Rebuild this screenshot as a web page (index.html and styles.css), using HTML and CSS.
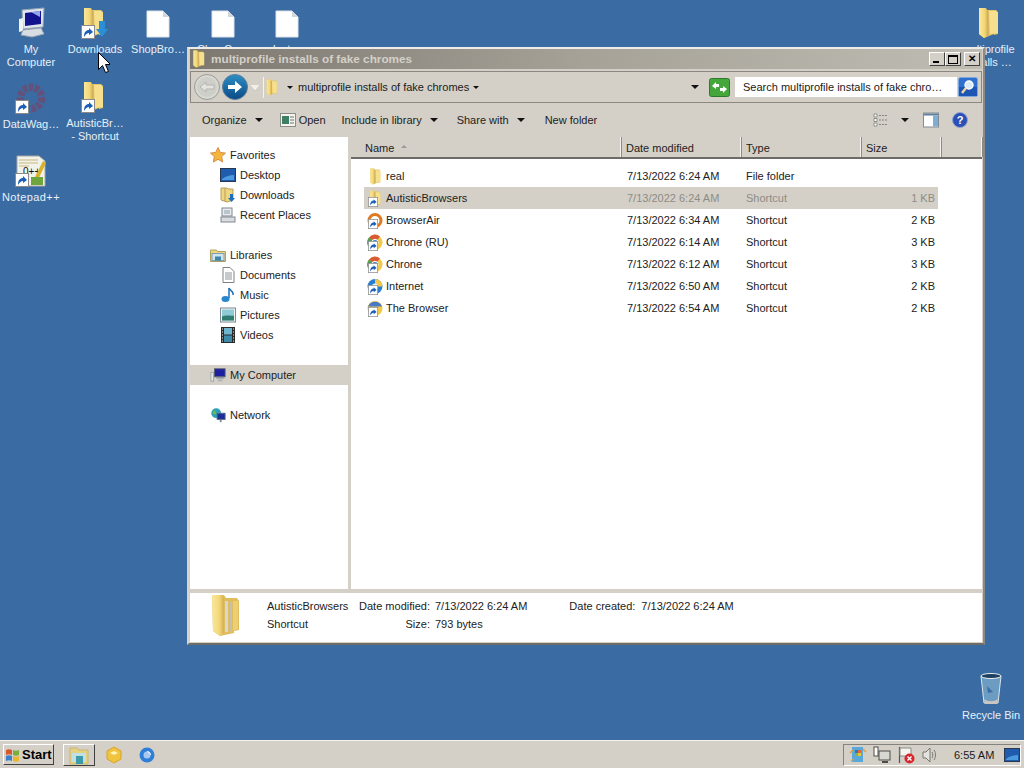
FILE: index.html
```html
<!DOCTYPE html>
<html lang="en">
<head>
<meta charset="utf-8">
<title>multiprofile installs of fake chromes</title>
<link rel="stylesheet" href="styles.css">
</head>
<body>
<svg class="defs" width="0" height="0" aria-hidden="true">
  <defs>
    <linearGradient id="fg" x1="0" x2="1" y1="0" y2="0"><stop offset="0" stop-color="#f8e79c"/><stop offset=".6" stop-color="#f3d878"/><stop offset="1" stop-color="#d3ae52"/></linearGradient>
    <linearGradient id="blue" x1="0" x2="0" y1="0" y2="1"><stop offset="0" stop-color="#2d8fc4"/><stop offset="1" stop-color="#0b4a86"/></linearGradient>
    <symbol id="folder" viewBox="0 0 24 32">
      <path d="M3 1h7l1 2h9l2 2v22l-4 1v-1L8 31 3 27z" fill="#e5c566"/>
      <path d="M3 1h6l3 3v25l-4 2-5-4z" fill="url(#fg)"/>
      <path d="M13 4h7l2 2v20l-8 1z" fill="#f6e08e"/>
      <path d="M12 4v25" stroke="#c9ad63" fill="none"/>
    </symbol>
    <symbol id="bigfolder" viewBox="0 0 32 44">
      <path d="M2 2h12l2 3h11l2 3v29l-5 1v2L10 43l-7-5z" fill="#e0bd5c"/>
      <path d="M2 2h9l3 4v33l-3 4-8-5z" fill="url(#fg)"/>
      <rect x="15" y="8" width="3" height="31" fill="#d8d8d0"/>
      <rect x="20" y="9" width="2" height="29" fill="#c4c0b4"/>
      <path d="M23 8h5v28l-5 2z" fill="#eccf74"/>
    </symbol>
    <symbol id="arrow" viewBox="0 0 14 14">
      <rect x=".5" y=".5" width="13" height="13" fill="#fff" stroke="#8a8a8a"/>
      <path d="M3 12c0-5 2-7 5-7V3l4 4-4 3V8c-2 0-3 1-5 4z" fill="#1c5fb8"/>
    </symbol>
    <symbol id="dlarrow" viewBox="0 0 12 18">
      <path d="M3 1h6v8h3l-6 8-6-8h3z" fill="#2b8fd6"/>
    </symbol>
    <symbol id="file" viewBox="0 0 24 28">
      <path d="M1 1h16l6 6v20H1z" fill="#fff" stroke="#dfe3e8"/>
      <path d="M17 1v6h6z" fill="#cfd6de"/>
    </symbol>
    <symbol id="computer" viewBox="0 0 32 32">
      <path d="M7 3l22-2-1 19-20 2z" fill="#dfe5ee" stroke="#9aa4b2"/>
      <path d="M10 6l16-2v13l-16 2z" fill="#12128f"/>
      <path d="M16 5l9-1v6z" fill="#8fa7e8"/>
      <path d="M4 12l4-1v13l-4 1z" fill="#eef2f6"/>
      <path d="M8 23l18-2 3 6-12 3-11-2z" fill="#d8dde4" stroke="#9aa4b2"/>
    </symbol>
    <symbol id="gear" viewBox="0 0 30 30">
      <circle cx="15" cy="15" r="10" fill="none" stroke="#7f3f62" stroke-width="7" stroke-dasharray="4 1.6"/>
    </symbol>
    <symbol id="npp" viewBox="0 0 30 32">
      <path d="M1 1h22l6 5v25H1z" fill="#f2f2ec" stroke="#a8a8a0"/>
      <path d="M3 5h19M3 8h19M3 11h10" stroke="#c9b878" fill="none"/>
      <text x="7" y="20" font-size="10" font-family="Liberation Sans" fill="#111">0++</text>
      <path d="M16 28L27 6l3 2-10 21z" fill="#d7b22a"/>
      <rect x="15" y="22" width="12" height="8" fill="#6ea53c"/>
    </symbol>
    <symbol id="back" viewBox="0 0 26 26">
      <circle cx="13" cy="13" r="12.5" fill="#d9d9d4" stroke="#9a9a96"/>
      <circle cx="13" cy="13" r="10" fill="#cfcfca"/>
      <path d="M6 13l6-5v3h8v4h-8v3z" fill="#e3e3df" stroke="#b5b5b0"/>
    </symbol>
    <symbol id="fwd" viewBox="0 0 26 26">
      <circle cx="13" cy="13" r="12.5" fill="url(#blue)" stroke="#5a7f9a"/>
      <path d="M20 13l-7-6v4H6v4h7v4z" fill="#fff"/>
    </symbol>
    <symbol id="refresh" viewBox="0 0 21 19">
      <rect x=".5" y=".5" width="20" height="18" rx="2" fill="#45a63c" stroke="#2d7a2c"/>
      <path d="M3 8l4-4v2h3v3H7v2zM18 11l-4 4v-2h-3v-3h3V8z" fill="#fff"/>
    </symbol>
    <symbol id="search" viewBox="0 0 20 20">
      <rect x=".5" y=".5" width="19" height="19" rx="2" fill="#2f6fd0" stroke="#7ea6dc"/>
      <rect x="1" y="10" width="18" height="9" fill="#1c56b4"/>
      <circle cx="11" cy="8" r="4" fill="#d9ebf8" stroke="#fff" stroke-width="1.4"/>
      <path d="M8 11l-4 5" stroke="#f0d9a0" stroke-width="2.4"/>
    </symbol>
    <symbol id="open" viewBox="0 0 16 14">
      <rect x=".5" y=".5" width="15" height="13" fill="#f3f3ef" stroke="#8c8c88"/>
      <rect x="2" y="3" width="7" height="8" fill="#3d7f60"/>
      <path d="M10 4h4M10 7h4M10 10h4" stroke="#70706c"/>
    </symbol>
    <symbol id="views" viewBox="0 0 16 14">
      <path d="M1 1h3v3H1zM1 5.500h3v3H1zM1 10h3v3H1z" fill="#fff" stroke="#8e8e8a"/>
      <path d="M6 2.500h9M6 7h9M6 11.500h9" stroke="#85857f" stroke-dasharray="2 1"/>
    </symbol>
    <symbol id="pane" viewBox="0 0 16 15">
      <rect x=".5" y=".5" width="15" height="14" fill="#fff" stroke="#7f8a94"/>
      <rect x="1" y="1" width="14" height="2" fill="#5f7f9a"/>
      <rect x="10" y="3" width="5" height="11" fill="#7faed0"/>
    </symbol>
    <symbol id="help" viewBox="0 0 16 16">
      <circle cx="8" cy="8" r="7.500" fill="#2b4fb5" stroke="#8ea3cf"/>
      <text x="8" y="12" text-anchor="middle" font-size="11" font-weight="700" font-family="Liberation Sans" fill="#fff">?</text>
    </symbol>
    <symbol id="star" viewBox="0 0 16 16">
      <path d="M8 .5l2.300 5 5.200.6-3.900 3.500 1.100 5.400L8 12.300 3.300 15l1.100-5.400L.5 6.100l5.200-.6z" fill="#f5b63c" stroke="#d98a45"/>
    </symbol>
    <symbol id="desktop" viewBox="0 0 16 14">
      <rect x=".5" y=".5" width="15" height="13" fill="#1f5cae" stroke="#29384f"/>
      <path d="M2 11c4-3 8-4 12-4v5H2z" fill="#4b9ae0"/>
    </symbol>
    <symbol id="dl" viewBox="0 0 16 16">
      <path d="M1 1h6l1 1h5v11l-6 2-6-2z" fill="#eed582" stroke="#b89f58"/>
      <path d="M5 1v13" stroke="#b89f58"/>
      <path d="M10 7h3v4h2l-3.500 4L8 11h2z" fill="#1d6fbe"/>
    </symbol>
    <symbol id="recent" viewBox="0 0 16 16">
      <rect x="2" y="1" width="10" height="8" fill="#e9ecef" stroke="#808890"/>
      <rect x="4" y="3" width="6" height="4" fill="#bac4cc"/>
      <rect x="1" y="10" width="14" height="5" fill="#d8dce0" stroke="#808890"/>
    </symbol>
    <symbol id="libs" viewBox="0 0 16 15">
      <path d="M.5 2.500h6l1 1.500h8v10H.5z" fill="#eed582" stroke="#b0a060"/>
      <rect x="2" y="6" width="12" height="7" fill="#cfe6ef" stroke="#7aa0b0"/>
      <rect x="5" y="9" width="6" height="4" fill="#3f86a8"/>
    </symbol>
    <symbol id="doc" viewBox="0 0 16 16">
      <path d="M3 .5h7l4 4v11H3z" fill="#fff" stroke="#7c8288"/>
      <path d="M5 6h7M5 8h7M5 10h7M5 12h7" stroke="#8f959b"/>
    </symbol>
    <symbol id="music" viewBox="0 0 16 16">
      <path d="M9 1v10" stroke="#1f6fb5" stroke-width="1.500" fill="none"/>
      <path d="M9 1c1 3 5 3 4 7" stroke="#1f6fb5" stroke-width="1.500" fill="none"/>
      <ellipse cx="5.500" cy="12" rx="4" ry="3" fill="#2a86cc"/>
    </symbol>
    <symbol id="pics" viewBox="0 0 16 15">
      <rect x=".5" y=".5" width="15" height="14" fill="#f5f5f2" stroke="#7f8890"/>
      <rect x="2" y="2" width="12" height="11" fill="#8ecbd6"/>
      <path d="M2 9c4-2 8 0 12-1v5H2z" fill="#2f7d70"/>
    </symbol>
    <symbol id="videos" viewBox="0 0 14 16">
      <rect width="14" height="16" fill="#2a2a2a"/>
      <rect x="3" y="1" width="8" height="6.500" fill="#6db4cf"/>
      <rect x="3" y="8.500" width="8" height="6.500" fill="#3d8aa8"/>
      <path d="M1 2h1M1 5h1M1 8h1M1 11h1M1 14h1M12 2h1M12 5h1M12 8h1M12 11h1M12 14h1" stroke="#eee"/>
    </symbol>
    <symbol id="pc" viewBox="0 0 18 16">
      <rect x="5" y="1" width="12" height="9" fill="#1b1fa0" stroke="#5a6270"/>
      <path d="M9 13h5v2H9z" fill="#aab0b8"/>
      <path d="M7 11h9" stroke="#8a929c" stroke-width="2"/>
      <rect x="1" y="5" width="3" height="10" fill="#e6e8ea" stroke="#9aa0a6"/>
    </symbol>
    <symbol id="net" viewBox="0 0 18 16">
      <circle cx="7" cy="6" r="5.500" fill="#2fa0b5"/>
      <path d="M4 3c2 0 3 1 3 3S4 7 3 6z" fill="#69bb4a"/>
      <rect x="8" y="6" width="9" height="7" fill="#1b2f9a" stroke="#5a6a80"/>
      <path d="M12 13v3" stroke="#7a828c" stroke-width="2"/>
    </symbol>
    <symbol id="ring" viewBox="0 0 16 16">
      <circle cx="8" cy="8" r="6" fill="none" stroke="#e07a22" stroke-width="3"/>
      <circle cx="8" cy="8" r="3" fill="#fff"/>
    </symbol>
    <symbol id="chrome" viewBox="0 0 16 16">
      <circle cx="8" cy="8" r="7.500" fill="#f2c84a"/>
      <path d="M8 8L2 3a7.500 7.500 0 0 1 11-1z" fill="#dc5a32"/>
      <path d="M8 8L2 3a7.500 7.500 0 0 0 3 12z" fill="#4f9e50"/>
      <circle cx="8" cy="8" r="3.200" fill="#4a88d8" stroke="#fff"/>
    </symbol>
    <symbol id="inet" viewBox="0 0 16 16">
      <circle cx="8" cy="8" r="7.500" fill="#2a7ed0"/>
      <path d="M8 .5a7.500 7.500 0 0 1 7.500 7.500H8z" fill="#f2c84a"/>
      <circle cx="8" cy="8" r="3" fill="#e8f2fb"/>
    </symbol>
    <symbol id="browser" viewBox="0 0 16 16">
      <circle cx="8" cy="8" r="7.500" fill="#f2c84a"/>
      <path d="M1 6a7.500 7.500 0 0 1 14 0z" fill="#4a78c8"/>
      <path d="M1 9c3-1 5 0 6 6a7.500 7.500 0 0 1-6-6z" fill="#4f9e50"/>
    </symbol>
    <symbol id="logo" viewBox="0 0 16 16">
      <path d="M1 3c2-1 4-1 6 0v5c-2-1-4-1-6 0z" fill="#d9582b"/>
      <path d="M8 3c2 1 4 1 6 0v5c-2 1-4 1-6 0z" fill="#7bae3c"/>
      <path d="M1 9c2-1 4-1 6 0v5c-2-1-4-1-6 0z" fill="#3c80c8"/>
      <path d="M8 9c2 1 4 1 6 0v5c-2 1-4 1-6 0z" fill="#e8b72e"/>
    </symbol>
    <symbol id="explorer" viewBox="0 0 22 20">
      <path d="M2 3h7l2 2h9v14H2z" fill="#e6d180" stroke="#c8b870"/>
      <rect x="4" y="8" width="14" height="9" fill="#bfe0e6"/>
      <rect x="8" y="11" width="7" height="8" fill="#3f9aa8"/>
    </symbol>
    <symbol id="hex" viewBox="0 0 18 18">
      <path d="M9 1l7 4v8l-7 4-7-4V5z" fill="#f0c43e" stroke="#d9a22a"/>
      <path d="M5 7l4-2 4 2-4 2z" fill="#fff3b8"/>
    </symbol>
    <symbol id="qchrome" viewBox="0 0 16 16">
      <circle cx="8" cy="8" r="7.500" fill="#2f7fd8"/>
      <circle cx="8" cy="8" r="3.500" fill="#a9c8ef"/>
      <path d="M8 4.500a3.500 3.500 0 0 1 3.500 3.500" stroke="#fff" fill="none"/>
    </symbol>
    <symbol id="update" viewBox="0 0 18 18">
      <rect x="3" y="1" width="11" height="15" fill="#58a8dc"/>
      <rect x="6" y="4" width="3" height="3" fill="#3a6fc0"/><rect x="9" y="4" width="3" height="3" fill="#d86a3a"/>
      <rect x="6" y="7" width="3" height="3" fill="#7ab84a"/><rect x="9" y="7" width="3" height="3" fill="#e8c23a"/>
      <path d="M1 7l3-3M17 6l-3-3M2 15l3-2" stroke="#e0a040" stroke-width="1.500"/>
    </symbol>
    <symbol id="lan" viewBox="0 0 18 18">
      <rect x="6" y="5" width="11" height="9" fill="#d8d8d2" stroke="#4c4c48"/>
      <rect x="1" y="1" width="4" height="9" fill="#fff" stroke="#4c4c48"/>
      <path d="M9 16h6" stroke="#4c4c48" stroke-width="2"/>
    </symbol>
    <symbol id="flag" viewBox="0 0 18 18">
      <path d="M2.500 1v16" stroke="#55554f" stroke-width="1.200"/>
      <path d="M3 2h11v8H3z" fill="#f4f4f0" stroke="#8a8a84"/>
      <circle cx="12.500" cy="12.500" r="5" fill="#d8262c"/>
      <path d="M10.500 10.500l4 4M14.500 10.500l-4 4" stroke="#fff" stroke-width="1.400"/>
    </symbol>
    <symbol id="speaker" viewBox="0 0 18 18">
      <path d="M2 6h3l4-4v14l-4-4H2z" fill="#e4e4de" stroke="#777770"/>
      <path d="M11 6c1 2 1 4 0 6M13 4c2 3 2 7 0 10" stroke="#777770" fill="none"/>
    </symbol>
    <symbol id="bin" viewBox="0 0 26 34">
      <path d="M3 4h20l-3 27H6z" fill="#6d9cc2" stroke="#dce4ea"/>
      <ellipse cx="13" cy="4" rx="10" ry="2.500" fill="#1d3f60" stroke="#e8eef2"/>
      <path d="M6 27c4 3 10 3 14 0l-1 5H7z" fill="#c9c5c1"/>
      <path d="M9 14l6 6-5 1z" fill="#3a6fa6"/>
    </symbol>
  </defs>
</svg>

<main class="desktop">
  <div class="dicon pos-computer"><svg class="ico-32"><use href="#computer"/></svg><span>My<br>Computer</span></div>
  <div class="dicon pos-downloads"><div class="stack stack-left"><svg class="ico-folder"><use href="#folder"/></svg><svg class="ov"><use href="#arrow"/></svg><svg class="ov-dl"><use href="#dlarrow"/></svg></div><span>Downloads</span></div>
  <div class="dicon pos-shop"><svg class="ico-file"><use href="#file"/></svg><span>ShopBro…</span></div>
  <div class="dicon pos-f2"><svg class="ico-file"><use href="#file"/></svg><span>Char Co…</span></div>
  <div class="dicon pos-f3"><svg class="ico-file"><use href="#file"/></svg><span>Inst…</span></div>
  <div class="dicon pos-wag"><div class="stack"><svg class="ico-gear"><use href="#gear"/></svg><svg class="ov"><use href="#arrow"/></svg></div><span>DataWag…</span></div>
  <div class="dicon pos-autistic"><div class="stack stack-left"><svg class="ico-folder"><use href="#folder"/></svg><svg class="ov"><use href="#arrow"/></svg></div><span>AutisticBr…<br>- Shortcut</span></div>
  <div class="dicon pos-npp"><div class="stack"><svg class="ico-32"><use href="#npp"/></svg><svg class="ov"><use href="#arrow"/></svg></div><span>Notepad++</span></div>
  <div class="dicon pos-multi"><svg class="ico-folder"><use href="#folder"/></svg><span>multiprofile<br>installs …</span></div>
  <div class="dicon pos-bin"><svg class="ico-bin"><use href="#bin"/></svg><span>Recycle Bin</span></div>

  <section class="window">
    <header class="titlebar">
      <svg class="title-ico"><use href="#folder"/></svg>
      <h1 class="title">multiprofile installs of fake chromes</h1>
      <div class="winbtns">
        <span class="winbtn"><i class="g-min"></i></span>
        <span class="winbtn"><i class="g-max"></i></span>
        <span class="winbtn winbtn-x">✕</span>
      </div>
    </header>

    <nav class="navbar">
      <svg class="nav-btn"><use href="#back"/></svg>
      <svg class="nav-btn nav-fwd"><use href="#fwd"/></svg>
      <i class="caret-hollow"></i>
      <div class="address">
        <svg class="addr-ico"><use href="#folder"/></svg>
        <i class="caret caret-sm"></i>
        <span class="addr-text">multiprofile installs of fake chromes</span>
        <i class="caret caret-sm"></i>
        <i class="caret addr-drop"></i>
      </div>
      <svg class="refresh"><use href="#refresh"/></svg>
      <div class="searchbox">Search multiprofile installs of fake chro…</div>
      <svg class="searchbtn"><use href="#search"/></svg>
    </nav>

    <div class="toolbar">
      <span class="tool t-org">Organize<i class="caret"></i></span>
      <span class="tool t-open"><svg class="i16"><use href="#open"/></svg>Open</span>
      <span class="tool t-lib">Include in library<i class="caret"></i></span>
      <span class="tool t-share">Share with<i class="caret"></i></span>
      <span class="tool t-new">New folder</span>
      <span class="tool-right">
        <svg class="i16"><use href="#views"/></svg>
        <i class="caret"></i>
        <svg class="i16 t-pane"><use href="#pane"/></svg>
        <svg class="i16 t-help"><use href="#help"/></svg>
      </span>
    </div>

    <div class="panes">
      <aside class="sidebar">
        <div class="side-item top"><svg class="i16"><use href="#star"/></svg>Favorites</div>
        <div class="side-item"><svg class="i16"><use href="#desktop"/></svg>Desktop</div>
        <div class="side-item"><svg class="i16"><use href="#dl"/></svg>Downloads</div>
        <div class="side-item"><svg class="i16"><use href="#recent"/></svg>Recent Places</div>
        <div class="side-gap"></div>
        <div class="side-item top"><svg class="i16"><use href="#libs"/></svg>Libraries</div>
        <div class="side-item"><svg class="i16"><use href="#doc"/></svg>Documents</div>
        <div class="side-item"><svg class="i16"><use href="#music"/></svg>Music</div>
        <div class="side-item"><svg class="i16"><use href="#pics"/></svg>Pictures</div>
        <div class="side-item"><svg class="i16"><use href="#videos"/></svg>Videos</div>
        <div class="side-gap"></div>
        <div class="side-item top selected"><svg class="i16"><use href="#pc"/></svg>My Computer</div>
        <div class="side-gap"></div>
        <div class="side-item top"><svg class="i16"><use href="#net"/></svg>Network</div>
      </aside>
      <div class="files">
        <div class="thead">
          <div class="th th-name">Name<i class="sort"></i></div>
          <div class="th th-date">Date modified</div>
          <div class="th th-type">Type</div>
          <div class="th th-size">Size</div>
          <div class="th th-end"></div>
        </div>
        <div class="rows">
          <div class="row"><span class="r-name"><svg class="r-ico"><use href="#folder"/></svg>real</span><span class="r-date">7/13/2022 6:24 AM</span><span class="r-type">File folder</span><span class="r-size"></span></div>
          <div class="row sel"><span class="r-name"><span class="r-stack"><svg class="r-ico"><use href="#folder"/></svg><svg class="r-ov"><use href="#arrow"/></svg></span>AutisticBrowsers</span><span class="r-date">7/13/2022 6:24 AM</span><span class="r-type">Shortcut</span><span class="r-size">1 KB</span></div>
          <div class="row"><span class="r-name"><span class="r-stack"><svg class="r-ico"><use href="#ring"/></svg><svg class="r-ov"><use href="#arrow"/></svg></span>BrowserAir</span><span class="r-date">7/13/2022 6:34 AM</span><span class="r-type">Shortcut</span><span class="r-size">2 KB</span></div>
          <div class="row"><span class="r-name"><span class="r-stack"><svg class="r-ico"><use href="#chrome"/></svg><svg class="r-ov"><use href="#arrow"/></svg></span>Chrone (RU)</span><span class="r-date">7/13/2022 6:14 AM</span><span class="r-type">Shortcut</span><span class="r-size">3 KB</span></div>
          <div class="row"><span class="r-name"><span class="r-stack"><svg class="r-ico"><use href="#chrome"/></svg><svg class="r-ov"><use href="#arrow"/></svg></span>Chrone</span><span class="r-date">7/13/2022 6:12 AM</span><span class="r-type">Shortcut</span><span class="r-size">3 KB</span></div>
          <div class="row"><span class="r-name"><span class="r-stack"><svg class="r-ico"><use href="#inet"/></svg><svg class="r-ov"><use href="#arrow"/></svg></span>Internet</span><span class="r-date">7/13/2022 6:50 AM</span><span class="r-type">Shortcut</span><span class="r-size">2 KB</span></div>
          <div class="row"><span class="r-name"><span class="r-stack"><svg class="r-ico"><use href="#browser"/></svg><svg class="r-ov"><use href="#arrow"/></svg></span>The Browser</span><span class="r-date">7/13/2022 6:54 AM</span><span class="r-type">Shortcut</span><span class="r-size">2 KB</span></div>
        </div>
      </div>
    </div>

    <footer class="details">
      <svg class="det-ico"><use href="#bigfolder"/></svg>
      <div class="det-name"><div>AutisticBrowsers</div><div>Shortcut</div></div>
      <dl class="det-grid">
        <dt>Date modified:</dt><dd>7/13/2022 6:24 AM</dd>
        <dt>Size:</dt><dd>793 bytes</dd>
      </dl>
      <dl class="det-grid det-created">
        <dt>Date created:</dt><dd>7/13/2022 6:24 AM</dd>
      </dl>
    </footer>
  </section>

  <svg class="cursor" viewBox="0 0 12 22"><path d="M.5.500v17l4-4 3 7 3-1-3-7h5z" fill="#fff" stroke="#000"/></svg>
</main>

<footer class="taskbar">
  <button class="start"><svg class="start-logo"><use href="#logo"/></svg>Start</button>
  <span class="qbtn"><svg class="q-ico"><use href="#explorer"/></svg></span>
  <svg class="q-hex"><use href="#hex"/></svg>
  <svg class="q-chrome"><use href="#qchrome"/></svg>
  <div class="tray">
    <svg class="tray-ico"><use href="#update"/></svg>
    <svg class="tray-ico"><use href="#lan"/></svg>
    <svg class="tray-ico"><use href="#flag"/></svg>
    <svg class="tray-ico"><use href="#speaker"/></svg>
    <span class="clock">6:55 AM</span>
    <svg class="tray-desk"><use href="#desktop"/></svg>
  </div>
</footer>
</body>
</html>
```

FILE: styles.css
```css
* { box-sizing: border-box; }
html, body { margin: 0; height: 768px; overflow: hidden; }
body {
  width: 1024px;
  display: flex;
  flex-direction: column;
  font: 11px/14px "Liberation Sans", Arial, sans-serif;
  color: #1a1a1a;
  background: #3a6ca3;
}
.defs { position: absolute; }
svg { display: block; flex: none; }
i { display: block; flex: none; }

.desktop { position: relative; flex: 1; }

/* Desktop icons sit on a free canvas */
.dicon {
  position: absolute;
  width: 74px;
  display: flex;
  flex-direction: column;
  align-items: center;
  color: #e8f0f8;
  text-align: center;
  line-height: 13px;
}
.dicon > span { display: block; margin-top: 4px; white-space: nowrap; }
.stack { position: relative; }
.stack-left { margin-right: 4px; }
.ico-32 { width: 32px; height: 32px; }
.ico-folder { width: 24px; height: 32px; }
.ico-file { width: 24px; height: 28px; margin: 3px 0 1px; }
.ico-gear { width: 32px; height: 32px; opacity: .6; }
.ico-bin { width: 26px; height: 34px; }
.ov { position: absolute; left: 0; bottom: 0; width: 14px; height: 14px; }
.ov-dl { position: absolute; right: -3px; bottom: 1px; width: 12px; height: 18px; }
.pos-computer { left: -6px; top: 7px; }
.pos-downloads { left: 58px; top: 7px; }
.pos-shop { left: 121px; top: 7px; }
.pos-f2 { left: 186px; top: 7px; }
.pos-f3 { left: 250px; top: 7px; }
.pos-wag { left: -6px; top: 82px; }
.pos-autistic { left: 58px; top: 81px; }
.pos-npp { left: -6px; top: 155px; }
.pos-npp > span { letter-spacing: .4px; }
.pos-multi { left: 951px; top: 7px; }
.pos-bin { left: 954px; top: 672px; }
.pos-bin > span { margin-top: 3px; }

/* Window */
.window {
  position: absolute;
  left: 187px;
  top: 47px;
  width: 798px;
  height: 598px;
  display: flex;
  flex-direction: column;
  background: #d4d0c8;
  border: 2px solid #d8d5ce;
  border-top-color: #eeece8;
  border-right-color: #8c8a84;
  border-bottom-color: #6f6d68;
  padding: 0 1px 1px;
  box-shadow: inset -1px -1px 0 #d4d0c8;
}
.titlebar {
  height: 20px;
  display: flex;
  align-items: center;
  padding: 0 1px;
  background: linear-gradient(90deg, #7c7870, #a6a298 50%, #bfbcb3);
  margin-bottom: 2px;
}
.title-ico { width: 15px; height: 18px; }
.title {
  margin: 0 0 0 5px;
  font: 700 11.75px/14px "Liberation Sans", Arial, sans-serif;
  color: #d4d0c8;
  flex: 1;
}
.winbtns { display: flex; padding-right: 1px; }
.winbtn {
  width: 16px;
  height: 14px;
  background: #d4d0c8;
  border: 1px solid;
  border-color: #fff #404040 #404040 #fff;
  display: flex;
  align-items: center;
  justify-content: center;
  font-size: 10px;
  font-weight: 700;
  color: #000;
}
.winbtn-x { margin-left: 3px; }
.g-min { width: 6px; height: 2px; background: #000; margin-top: 6px; margin-right: 3px; }
.g-max { width: 10px; height: 9px; border: 1px solid #000; border-top-width: 2px; }

.navbar {
  height: 32px;
  display: flex;
  align-items: center;
  padding: 0 2px 0 3px;
  border: 1px solid;
  border-color: #f4f3f0 #f4f3f0 #85837d #f4f3f0;
  outline: 1px solid #8a8880;
  outline-offset: -1px;
}
.nav-btn { width: 26px; height: 26px; }
.nav-fwd { margin-left: 2px; }
.caret-hollow {
  width: 0; height: 0;
  margin: 2px 3px 0 2px;
  border: 5px solid transparent;
  border-top: 6px solid #f0efe8;
  border-bottom: 0;
  filter: drop-shadow(0 0 .5px #777);
}
.address {
  width: 440px;
  height: 21px;
  margin-right: 6px;
  display: flex;
  align-items: center;
  background: #d4d0c8;
  border-left: 1px solid #f4f3f0;
  padding-left: 1px;
}
.addr-ico { width: 13px; height: 17px; margin-right: 9px; }
.addr-text { margin: 0 4px 0 5px; white-space: nowrap; }
.caret { width: 0; height: 0; border: 4px solid transparent; border-top: 4px solid #111; border-bottom: 0; }
.caret-sm { border-width: 3px 3px 0; border-top-color: #111; }
.addr-drop { margin-left: auto; margin-right: 4px; }
.refresh { width: 21px; height: 19px; margin-right: 5px; }
.searchbox {
  width: 222px;
  height: 20px;
  padding: 3px 0 0 8px;
  background: #fff;
  margin-right: 1px;
  white-space: nowrap;
}
.searchbtn { width: 20px; height: 20px; }

.toolbar {
  height: 33px;
  margin-top: 1px;
  padding: 0 0 2px 12px;
  display: flex;
  align-items: center;
  color: #222;
}
.tool { display: flex; align-items: center; white-space: nowrap; }
.tool .caret { margin-left: 8px; }
.t-open { margin-left: 17px; }
.t-open .i16 { margin-right: 3px; }
.t-lib { margin-left: 16px; }
.t-share { margin-left: 19px; }
.t-new { margin-left: 20px; }
.tool-right { margin-left: auto; margin-right: 14px; display: flex; align-items: center; }
.tool-right .caret { margin: 0 14px 0 12px; }
.t-help { margin-left: 13px; }
.i16 { width: 16px; height: 16px; }

.panes {
  flex: 1;
  display: flex;
  min-height: 0;
  background: #fff;
}
.sidebar {
  width: 158px;
  padding-top: 8px;
  background: #fff;
}
.side-item {
  height: 20px;
  display: flex;
  align-items: center;
  padding-left: 30px;
  color: #222;
}
.side-item .i16 { margin-right: 4px; }
.side-item.top { padding-left: 20px; }
.side-item.selected { background: #d4d0c8; }
.side-gap { height: 20px; }
.files {
  flex: 1;
  min-width: 0;
  margin-left: 3px;
  position: relative;
  box-shadow: -3px 0 0 #d4d0c8;
}
.thead {
  height: 22px;
  display: flex;
  background: #d4d0c8;
  border-bottom: 2px solid #6d6b66;
  color: #222;
}
.th {
  padding: 4px 0 0 4px;
  border-right: 1px solid #f4f3f0;
  box-shadow: 1px 0 0 #8c8a84;
  margin-right: 1px;
  display: flex;
}
.th-name { width: 270px; padding-left: 14px; }
.th-date { width: 119px; }
.th-type { width: 119px; }
.th-size { width: 79px; }
.th-end { flex: 1; margin-right: 0; }
.sort {
  width: 0; height: 0;
  margin: 4px 0 0 7px;
  border: 3px solid transparent;
  border-bottom: 3px solid #9a9a94;
  border-top: 0;
}
.rows { padding: 6px 44px 0 13px; }
.row { height: 22px; display: flex; align-items: center; color: #222; }
.row.sel { background: #d4d0c8; }
.row.sel .r-type, .row.sel .r-size, .row.sel .r-date { color: #8e8c86; }
.r-name { width: 263px; display: flex; align-items: center; gap: 3px; padding-left: 3px; }
.r-ico { width: 16px; height: 17px; }
.r-stack { position: relative; display: block; width: 16px; height: 17px; }
.r-ov { position: absolute; left: 1px; bottom: 0; width: 10px; height: 10px; }
.r-date { width: 119px; }
.r-type { width: 100px; }
.r-size { flex: 1; text-align: right; padding-right: 3px; }

.details {
  height: 53px;
  display: flex;
  background: #fff;
  border-top: 4px solid #d4d0c8;
  color: #222;
}
.det-ico { width: 32px; height: 44px; margin: 0 0 0 20px; }
.det-name { margin-left: 25px; width: 89px; padding-top: 4px; line-height: 18px; white-space: nowrap; }
.det-grid {
  margin: 0;
  padding-top: 4px;
  display: grid;
  grid-template-columns: 74px auto;
  column-gap: 5px;
  line-height: 18px;
  align-content: start;
}
.det-grid dt { text-align: right; white-space: nowrap; }
.det-grid dd { margin: 0; white-space: nowrap; }
.det-created { margin-left: 42px; grid-template-columns: 66px auto; column-gap: 6px; }

.cursor { position: absolute; left: 98px; top: 52px; width: 12px; height: 22px; }

/* Taskbar */
.taskbar {
  height: 28px;
  display: flex;
  align-items: center;
  padding: 0 3px;
  background: #d4d0c8;
  border-top: 1px solid #f4f3f0;
  flex: none;
}
.start {
  width: 51px;
  height: 21px;
  padding: 0 0 0 1px;
  display: flex;
  align-items: center;
  gap: 1px;
  background: #d4d0c8;
  border: 1px solid;
  border-color: #fff #404040 #404040 #fff;
  font: 700 13px "Liberation Sans", Arial, sans-serif;
  color: #000;
}
.start-logo { width: 16px; height: 16px; }
.qbtn {
  width: 32px;
  height: 22px;
  margin-left: 9px;
  display: flex;
  align-items: center;
  justify-content: center;
  border: 1px solid;
  border-color: #fff #404040 #404040 #fff;
}
.q-ico { width: 22px; height: 20px; }
.q-hex { width: 18px; height: 18px; margin-left: 10px; }
.q-chrome { width: 16px; height: 16px; margin-left: 16px; }
.tray {
  margin-left: auto;
  width: 178px;
  height: 22px;
  display: flex;
  align-items: center;
  padding-left: 5px;
  gap: 6px;
  border: 1px solid;
  border-color: #85837d #fff #fff #85837d;
}
.tray-ico { width: 18px; height: 18px; }
.clock { margin-left: 9px; width: 44px; white-space: nowrap; }
.tray-desk { width: 16px; height: 14px; }
```
